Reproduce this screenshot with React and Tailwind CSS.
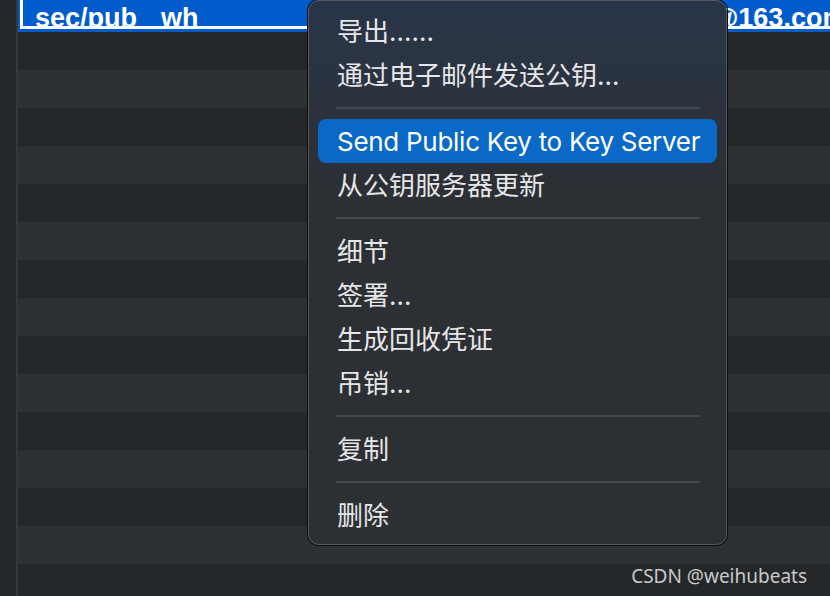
const ROWS = Array.from({ length: 15 }, (_, i) => i);

const MENU = [
  { label: "导出……" },
  { label: "通过电子邮件发送公钥..." },
  { sep: true },
  { label: "Send Public Key to Key Server", active: true },
  { label: "从公钥服务器更新" },
  { sep: true },
  { label: "细节" },
  { label: "签署..." },
  { label: "生成回收凭证" },
  { label: "吊销..." },
  { sep: true },
  { label: "复制" },
  { sep: true },
  { label: "删除" },
];

function KeyRowSelected() {
  return (
    <div className="h-[32px] shrink-0 bg-[#025bcb] pl-[2px] pb-[3px] flex flex-col justify-end overflow-hidden">
      <div className="h-[40px] shrink-0 border-[3px] border-r-0 border-white overflow-hidden flex items-end font-['Liberation_Sans',Arial,sans-serif] font-bold text-[27px] text-white">
        <span className="leading-[27px] mb-[-6px] pl-[12px] w-[138px] shrink-0">sec/pub</span>
        <span className="leading-[27px] mb-[-6px] w-[551px] shrink-0">wh</span>
        <span className="leading-[27px] mb-[-6px] whitespace-nowrap">@163.com</span>
      </div>
    </div>
  );
}

function ContextMenu() {
  return (
    <div className="absolute left-[308px] top-0 w-[419px] h-[545px] rounded-[11px] border border-[#55585c] shadow-[0_0_0_1px_#0c0d0e] bg-[linear-gradient(180deg,#283549_0px,#2b333f_90px,#2c2f33_200px)] pt-[8px] pb-[9px] px-[9px] font-['Inter','Noto_Sans_CJK_SC',sans-serif] text-[26px] text-[#e6e6e8]">
      {MENU.map((m, i) =>
        m.sep ? (
          <div key={i} className="h-[22px] flex items-center pl-[18px] pr-[17px]">
            <div className="h-[2px] w-full bg-[#44474b]" />
          </div>
        ) : (
          <div
            key={i}
            className={
              m.active
                ? "h-[44px] flex items-center pl-[19px] rounded-[8px] bg-[#0a69c6] text-white whitespace-nowrap tracking-[-0.28px]"
                : "h-[44px] flex items-center pl-[19px] whitespace-nowrap"
            }
          >
            {m.label}
          </div>
        )
      )}
    </div>
  );
}

export default function App() {
  return (
    <div className="relative w-[830px] h-[596px] overflow-hidden bg-[#25282b] flex">
      <div className="w-[18px] shrink-0 bg-[#25282b] border-r-2 border-[#36383b]" />
      <div className="flex-1 flex flex-col min-w-0">
        <KeyRowSelected />
        {ROWS.map((i) => (
          <div key={i} className={i % 2 === 0 ? "h-[38px] shrink-0 bg-[#24272a]" : "h-[38px] shrink-0 bg-[#2e3134]"} />
        ))}
      </div>
      <ContextMenu />
      <div className="absolute right-[23px] bottom-[10px] font-['Noto_Sans',sans-serif] text-[19px] leading-none text-[#c9c9c9]">
        CSDN @weihubeats
      </div>
    </div>
  );
}
